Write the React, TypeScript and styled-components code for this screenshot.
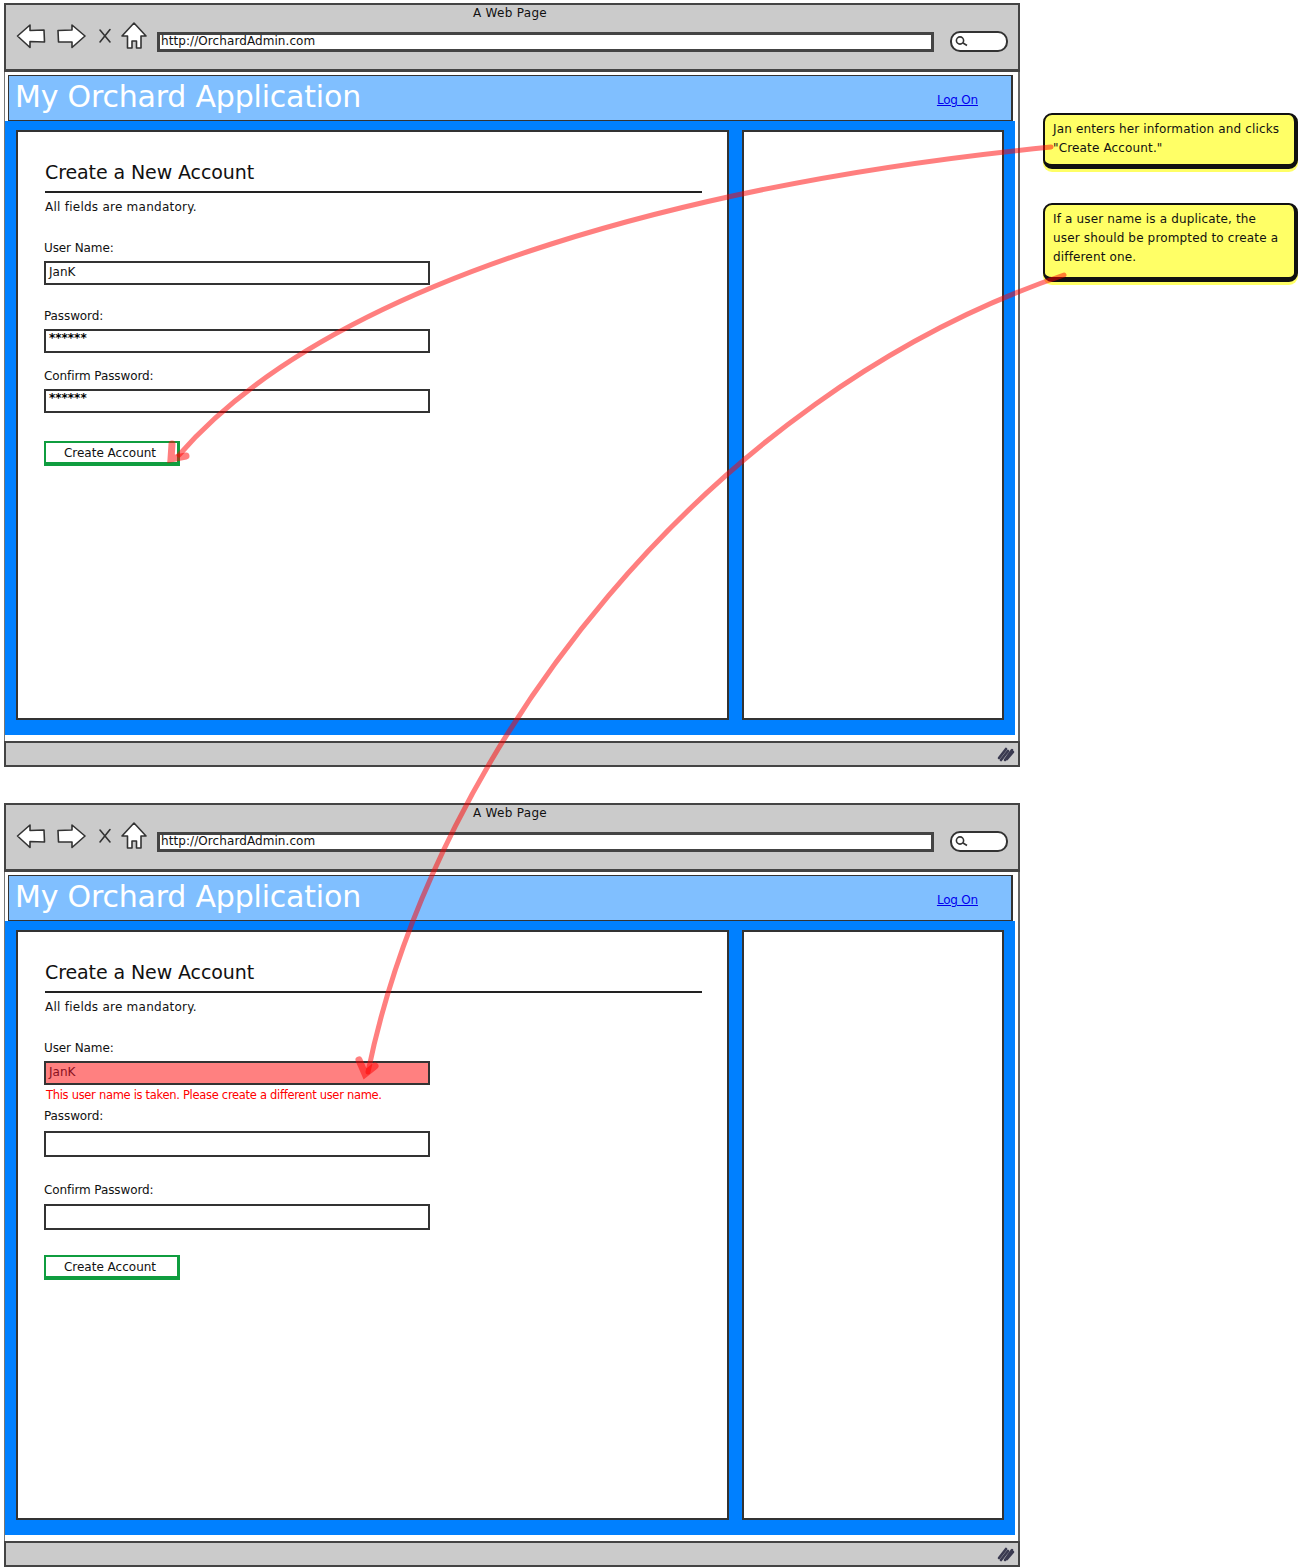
import styled, { createGlobalStyle } from "styled-components";

const GlobalStyle = createGlobalStyle`
  html, body {
    margin: 0;
    padding: 0;
    background: #fff;
    font-family: "DejaVu Sans", "Liberation Sans", sans-serif;
    color: #111;
  }
`;

const Page = styled.div`
  position: relative;
  width: 1300px;
  height: 1568px;
  overflow: hidden;
  padding: 3px 0 0 4px;
  box-sizing: border-box;
  display: flex;
  flex-direction: column;
  gap: 36px;
`;

const Browser = styled.div`
  width: 1016px;
  height: 764px;
  display: flex;
  flex-direction: column;
`;

const Toolbar = styled.div`
  height: 69px;
  box-sizing: border-box;
  background: #cbcbcb;
  border: 2px solid #444;
  border-bottom-width: 3px;
  display: flex;
  flex-direction: column;
`;

const WindowTitle = styled.div`
  height: 18px;
  line-height: 17px;
  text-align: center;
  font-size: 12px;
  padding-right: 4px;
  letter-spacing: 0.3px;
`;

const NavRow = styled.div`
  display: flex;
  align-items: center;
  height: 30px;
  margin-top: -2px;
  padding-left: 10px;
`;

const NavIcon = styled.svg<{ $gap: number }>`
  flex: none;
  margin-right: ${(p) => p.$gap}px;
  fill: #fff;
  stroke: #333;
  stroke-width: 1.6;
  stroke-linejoin: round;
  stroke-linecap: round;
`;

const UrlBar = styled.div`
  width: 777px;
  height: 20px;
  box-sizing: border-box;
  margin-top: 12px;
  background: #fff;
  border: 3px solid #444;
  font-size: 12px;
  line-height: 13px;
  padding-left: 1px;
  letter-spacing: 0.08px;
`;

const SearchPill = styled.div`
  width: 58px;
  height: 21px;
  margin: 10px 0 0 16px;
  box-sizing: border-box;
  background: #fff;
  border: 2px solid #333;
  border-radius: 10px;
  display: flex;
  align-items: center;
  padding-left: 2px;
`;

const Viewport = styled.div`
  height: 669px;
  box-sizing: border-box;
  padding-top: 3px;
  border-right: 2px solid #666;
  border-left: 1px solid #777;
  display: flex;
  flex-direction: column;
`;

const SiteHeader = styled.div`
  height: 46px;
  box-sizing: border-box;
  margin: 0 5px 0 3px;
  background: #80bfff;
  border: 1px solid #333;
  border-right-width: 2px;
  display: flex;
  justify-content: space-between;
  align-items: flex-start;
`;

const SiteTitle = styled.div`
  color: #fff;
  font-size: 30px;
  line-height: 42px;
  padding-left: 6px;
  letter-spacing: -0.2px;
`;

const LogOn = styled.a`
  color: #0000ee;
  text-decoration: underline;
  font-size: 12px;
  line-height: 14px;
  margin: 17px 33px 0 0;
  letter-spacing: -0.2px;
`;

const ContentArea = styled.div`
  height: 614px;
  box-sizing: border-box;
  background: #0080ff;
  margin-right: 3px;
  padding: 9px 9px 15px 11px;
  display: flex;
  gap: 13px;
`;

const Panel = styled.div<{ $width: number }>`
  width: ${(p) => p.$width}px;
  box-sizing: border-box;
  background: #fff;
  border: 2px solid #333;
`;

const MainPanel = styled(Panel)`
  padding: 28px 25px 0 27px;
`;

const Heading = styled.h2`
  margin: 0;
  font-size: 19px;
  font-weight: 400;
  line-height: 24px;
  height: 31px;
  border-bottom: 2px solid #222;
  letter-spacing: -0.1px;
  box-sizing: content-box;
`;

const Note = styled.p`
  margin: 7px 0 0;
  font-size: 12px;
  line-height: 15px;
  letter-spacing: 0.25px;
`;

const Label = styled.div<{ $top: number }>`
  margin-top: ${(p) => p.$top}px;
  font-size: 12px;
  line-height: 15px;
  margin-left: -1px;
  letter-spacing: -0.1px;
`;

const Input = styled.div<{ $top: number; $height: number; $error?: boolean }>`
  margin: ${(p) => p.$top}px 0 0 -1px;
  width: 386px;
  height: ${(p) => p.$height}px;
  box-sizing: border-box;
  background: ${(p) => (p.$error ? "#ff8080" : "#fff")};
  color: ${(p) => (p.$error ? "#8a1020" : "#111")};
  border: 2px solid #333;
  font-size: 12px;
  line-height: 19px;
  padding-left: 3px;
`;

const Stars = styled.span`
  display: block;
  font-weight: 700;
  color: #000;
  line-height: 15px;
`;

const ErrorText = styled.div`
  margin: 3px 0 0 1px;
  color: #ff0000;
  font-size: 11.5px;
  line-height: 14px;
  letter-spacing: -0.3px;
`;

const SubmitButton = styled.div<{ $top: number }>`
  margin: ${(p) => p.$top}px 0 0 -1px;
  width: 136px;
  height: 25px;
  box-sizing: border-box;
  background: #fff;
  border: 2px solid #0f9d3f;
  border-right-width: 3px;
  border-bottom-width: 4px;
  font-size: 12px;
  line-height: 21px;
  text-align: center;
  padding-right: 3px;
`;

const StatusBar = styled.div`
  height: 26px;
  box-sizing: border-box;
  background: #cbcbcb;
  border: 2px solid #444;
  display: flex;
  justify-content: flex-end;
  align-items: center;
  padding-right: 3px;
`;

const Sticky = styled.div<{ $top: number; $height: number }>`
  position: absolute;
  left: 1043px;
  top: ${(p) => p.$top}px;
  width: 255px;
  height: ${(p) => p.$height}px;
  box-sizing: border-box;
  background: #ffff66;
  border: 2px solid #111;
  border-right-width: 4px;
  border-bottom-width: 5px;
  border-radius: 9px;
  padding: 5px 0 0 8px;
  font-size: 12px;
  line-height: 19px;
  letter-spacing: 0.15px;
  box-shadow: 0 3px 0 #ffff66;
  white-space: pre-line;
`;

const ArrowLayer = styled.svg`
  position: absolute;
  left: 0;
  top: 0;
  pointer-events: none;
`;

const BackIcon = () => (
  <NavIcon $gap={11} width="30" height="28" viewBox="0 0 30 28">
    <path d="M1.5 14 L14 3 L14 8.5 L28 8 L28.5 20 L14 19.5 L14 25.5 Z" />
  </NavIcon>
);

const ForwardIcon = () => (
  <NavIcon $gap={12} width="29" height="28" viewBox="0 0 29 28">
    <path d="M1 8.5 L15 8 L15 3 L28 14 L15 25.5 L15 20 L1.5 20 Z" />
  </NavIcon>
);

const CloseIcon = () => (
  <NavIcon $gap={9} width="14" height="16" viewBox="0 0 14 16">
    <path d="M2 2 L12 14 M12 1.5 L2 14" fill="none" />
  </NavIcon>
);

const HomeIcon = () => (
  <NavIcon $gap={10} width="26" height="28" viewBox="0 0 26 28">
    <path d="M13 1 L25 14 L20 14 L20 26 L15.5 26 L15.5 19 L11 19 L11 26 L6.5 26 L6.5 14 L1 14 Z" />
  </NavIcon>
);

const SearchGlass = () => (
  <svg width="14" height="14" viewBox="0 0 14 14" fill="none" stroke="#333" strokeWidth="1.6">
    <circle cx="6" cy="6.5" r="3.6" />
    <path d="M9 9 L13 11.5" />
  </svg>
);

const ResizeGrip = () => (
  <svg width="18" height="16" viewBox="0 0 18 16" fill="none" stroke="#3a3a50" strokeWidth="2.6" strokeLinecap="round">
    <path d="M2 12 L9 3 M4 14 L11 5 M8 14 L15 4 M10 13 L16 6" />
  </svg>
);

type FieldSpec = {
  label: string;
  value?: string;
  labelTop: number;
  inputTop: number;
  height: number;
  error?: string;
};

const validFields: FieldSpec[] = [
  { label: "User Name:", value: "JanK", labelTop: 26, inputTop: 5, height: 24 },
  { label: "Password:", value: "******", labelTop: 24, inputTop: 5, height: 24 },
  { label: "Confirm Password:", value: "******", labelTop: 16, inputTop: 5, height: 24 },
];

const errorFields: FieldSpec[] = [
  {
    label: "User Name:",
    value: "JanK",
    labelTop: 26,
    inputTop: 5,
    height: 24,
    error: "This user name is taken. Please create a different user name.",
  },
  { label: "Password:", labelTop: 7, inputTop: 7, height: 26 },
  { label: "Confirm Password:", labelTop: 26, inputTop: 6, height: 26 },
];

function BrowserWindow({ fields, buttonTop }: { fields: FieldSpec[]; buttonTop: number }) {
  return (
    <Browser>
      <Toolbar>
        <WindowTitle>A Web Page</WindowTitle>
        <NavRow>
          <BackIcon />
          <ForwardIcon />
          <CloseIcon />
          <HomeIcon />
          <UrlBar>http://OrchardAdmin.com</UrlBar>
          <SearchPill>
            <SearchGlass />
          </SearchPill>
        </NavRow>
      </Toolbar>
      <Viewport>
        <SiteHeader>
          <SiteTitle>My Orchard Application</SiteTitle>
          <LogOn href="#">Log On</LogOn>
        </SiteHeader>
        <ContentArea>
          <MainPanel $width={713}>
            <Heading>Create a New Account</Heading>
            <Note>All fields are mandatory.</Note>
            {fields.map((f) => (
              <div key={f.label}>
                <Label $top={f.labelTop}>{f.label}</Label>
                <Input $top={f.inputTop} $height={f.height} $error={!!f.error}>
                  {f.value === "******" ? <Stars>{f.value}</Stars> : f.value}
                </Input>
                {f.error && <ErrorText>{f.error}</ErrorText>}
              </div>
            ))}
            <SubmitButton $top={buttonTop}>Create Account</SubmitButton>
          </MainPanel>
          <Panel $width={262} />
        </ContentArea>
      </Viewport>
      <StatusBar>
        <ResizeGrip />
      </StatusBar>
    </Browser>
  );
}

export default function App() {
  return (
    <Page>
      <GlobalStyle />
      <BrowserWindow fields={validFields} buttonTop={28} />
      <BrowserWindow fields={errorFields} buttonTop={25} />
      <Sticky $top={113} $height={56}>
        {'Jan enters her information and clicks\n"Create Account."'}
      </Sticky>
      <Sticky $top={203} $height={79}>
        {"If a user name is a duplicate, the\nuser should be prompted to create a\ndifferent one."}
      </Sticky>
      <ArrowLayer width="1300" height="1568" viewBox="0 0 1300 1568" fill="none">
        <g stroke="#ff0000" strokeOpacity="0.5" strokeWidth="5" strokeLinecap="round">
          <path d="M1051 147 C 720 180, 340 270, 179 455" />
          <path d="M172 444 L171 459 L186 456" strokeWidth="7" />
          <path d="M1064 275 C 710 395, 435 745, 368 1072" />
          <path d="M359 1060 L365 1074 L375 1066" strokeWidth="7" />
        </g>
      </ArrowLayer>
    </Page>
  );
}
